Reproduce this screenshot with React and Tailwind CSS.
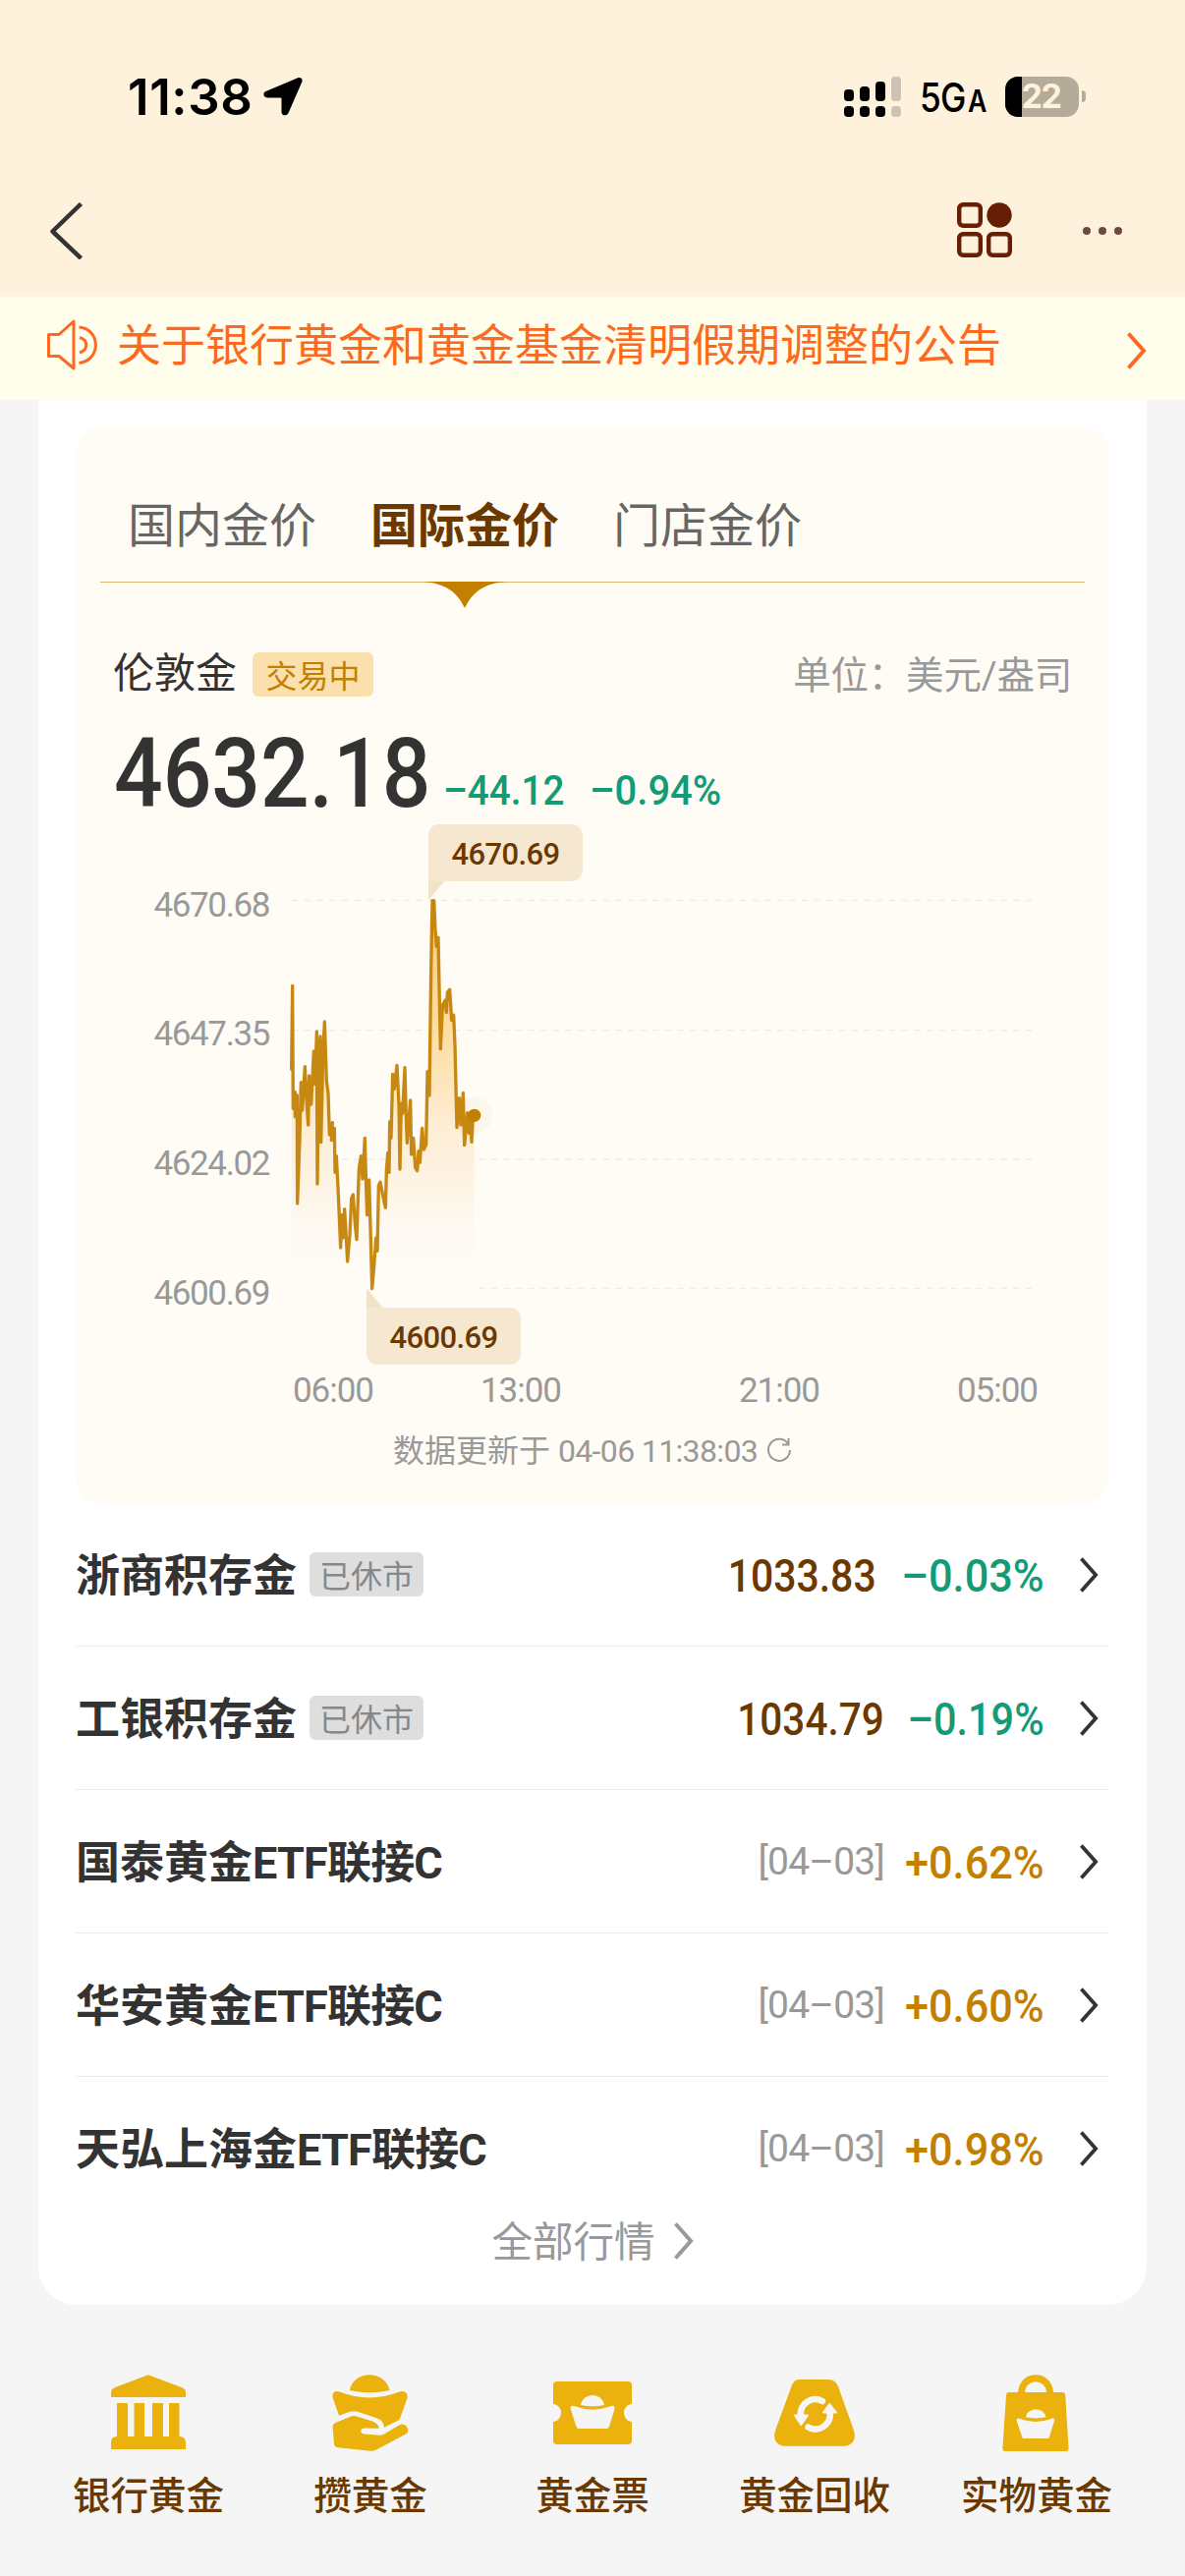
import { useState } from 'react';

const tabs = ['国内金价', '国际金价', '门店金价'];

const funds = [
    { name: '浙商积存金', closed: true, price: '1033.83', change: '–0.03%' },
    { name: '工银积存金', closed: true, price: '1034.79', change: '–0.19%', tight: true },
    { name: '国泰黄金ETF联接C', date: '[04–03]', change: '+0.62%' },
    { name: '华安黄金ETF联接C', date: '[04–03]', change: '+0.60%' },
    { name: '天弘上海金ETF联接C', date: '[04–03]', change: '+0.98%' },
];

const yLabels = ['4670.68', '4647.35', '4624.02', '4600.69'];
const xLabels = ['06:00', '13:00', '21:00', '05:00'];
const gridLines = [916.5, 1048.5, 1180, 1311.5];

// London gold intraday line, in thirds of a pixel
const linePoints = '80,805 83,550 85,925 91,875 91,950 97,885 98,1215 105,1020 109,845 113,930 121,797 127,915 131,975 134,825 140,912 148,750 152,850 157,690 159,1155 163,780 168,705 170,1028 176,760 181,660 187,840 192,878 196,1005 205,968 202,1022 211,985 213,1120 217,1070 222,1165 230,1350 233,1250 237,1320 242,1232 246,1300 251,1392 258,1310 263,1200 268,1188 274,1275 279,1325 286,1110 292,1070 297,1140 304,1015 308,1165 311,1250 317,1143 321,1290 326,1475 332,1405 338,1320 342,1360 346,1160 351,1150 360,1195 367,1228 370,1115 374,1060 378,1120 380,965 384,1015 389,820 394,865 402,793 408,915 411,1110 415,910 419,940 426,800 430,950 433,1030 443,900 446,1065 452,1015 458,1105 464,1115 468,1055 472,1090 479,985 484,1050 491,1035 495,812 501,885 506,500 510,290 515,290 519,380 523,430 528,403 535,743 541,610 549,595 553,632 556,570 563,562 569,655 575,640 579,730 585,983 592,893 597,975 604,877 608,1037 617,938 622,1000 626,960 630,1027 634,945 638,945';

function Chevron({ className }) {
    return (
        <svg viewBox="0 0 20 38" className={className} fill="none" stroke="currentColor" strokeWidth="4">
            <path d="M1.5 1.5 L17 19 L1.5 36.5" />
        </svg>
    );
}

function StatusBar() {
    return (
        <div className="flex h-[196px] items-center justify-between pl-[130px] pr-[101px]">
            <div className="flex items-center text-black">
                <span className="w-[138px] font-[Inter] text-[51px] font-semibold leading-none tracking-[0.6px]">11:38</span>
                <svg viewBox="0 0 40 40" className="h-[40px] w-[40px]">
                    <path d="M34.5 1.5 C38 0 40.5 2 39.3 5.5 L25.5 37 C24 40.5 18.5 40 18.5 36 V22.5 Q18.500 21.500 17.500 21.500 H4 C0 21.500 -1 16.500 2.500 15 Z" fill="#000" />
                </svg>
            </div>
            <div className="flex items-center">
                <svg viewBox="0 0 58 41" className="h-[41px] w-[58px]">
                    <rect x="0" y="13" width="10" height="12" rx="4" />
                    <rect x="16" y="10" width="10" height="15" rx="4" />
                    <rect x="32" y="5" width="10" height="20" rx="4" />
                    <rect x="48" y="0" width="10" height="25" rx="4" fill="#cdc3b2" />
                    <rect x="0" y="30" width="10" height="11" rx="4" />
                    <rect x="16" y="30" width="10" height="11" rx="4" />
                    <rect x="32" y="30" width="10" height="11" rx="4" />
                    <rect x="48" y="30" width="10" height="11" rx="4" fill="#cdc3b2" />
                </svg>
                <span className="ml-[19px] w-[87px] origin-left scale-x-[0.86] whitespace-nowrap pt-[3px] font-[Inter] text-[41px] font-medium leading-none tracking-[-1px] text-black">
                    5G<span className="ml-[3px] text-[31px] font-semibold">A</span>
                </span>
                <div className="relative flex h-[41px] w-[75px] items-center justify-center overflow-hidden rounded-[13px] bg-[#b4ab9a]">
                    <div className="absolute inset-y-0 left-0 w-[17px] bg-black" />
                    <span className="relative right-[1px] font-[Inter] text-[34px] font-bold leading-none tracking-[-1.5px] text-[#fff2dd]">22</span>
                </div>
                <div className="ml-[3px] h-[12px] w-[4px] rounded-r-full bg-[#b4ab9a]" />
            </div>
        </div>
    );
}

function NavBar() {
    return (
        <div className="flex h-[106px] items-start justify-between pl-[50px] pr-[64px] pt-[10px]">
            <svg viewBox="0 0 36 58" className="h-[58px] w-[36px]" fill="none" stroke="#333" strokeWidth="4.500" strokeLinejoin="round">
                <path d="M32.500 1.500 L3.500 29.500 L32.500 57" />
            </svg>
            <div className="flex items-center">
                <svg viewBox="0 0 56 56" className="mr-[72px] h-[56px] w-[56px]" fill="none" stroke="#661f05" strokeWidth="4.400">
                    <rect x="2.200" y="2.200" width="21.600" height="21.600" rx="4" />
                    <circle cx="43" cy="13" r="12.700" fill="#661f05" stroke="none" />
                    <rect x="2.200" y="32.200" width="21.600" height="21.600" rx="4" />
                    <rect x="32.200" y="32.200" width="21.600" height="21.600" rx="4" />
                </svg>
                <div className="mt-px flex gap-2">
                    <i className="h-2 w-2 rounded-full bg-[#6b4a40]" />
                    <i className="h-2 w-2 rounded-full bg-[#6b4a40]" />
                    <i className="h-2 w-2 rounded-full bg-[#6b4a40]" />
                </div>
            </div>
        </div>
    );
}

function Notice() {
    return (
        <div className="flex h-[105px] items-center bg-[#fffdec] pl-[47px] pr-[39px] text-[#fc6a21]">
            <svg viewBox="0 0 54 52" className="mb-[7px] h-[52px] w-[54px]" fill="none" stroke="currentColor" strokeWidth="3" strokeLinejoin="round">
                <path d="M2.500 15.500 H13 L28 2 V50 L13 37.500 H2.500 Z" />
                <path d="M33.500 8 C56 10 56 42 33.500 44.500" />
                <path d="M34 18.500 C43 21 43 31 34 34" />
            </svg>
            <span className="ml-[18px] flex-1 pb-[4px] text-[45px] leading-none">关于银行黄金和黄金基金清明假期调整的公告</span>
            <Chevron className="mt-[4px] h-[38px] w-[20px]" />
        </div>
    );
}

function GoldChart() {
    return (
        <div className="relative flex h-[559px]">
            <div className="w-[197px] pt-[20px] text-right text-[35px] tracking-[-0.040em] text-[#999]">
                {yLabels.map(label => (
                    <div key={label} className="flex h-[131.700px] items-center justify-end">{label}</div>
                ))}
            </div>
            <svg viewBox="274 836 855 559" className="h-[559px] w-[855px]">
                <defs>
                    <linearGradient id="area" gradientUnits="userSpaceOnUse" x1="0" y1="290" x2="0" y2="1475">
                        <stop offset="0" stopColor="#fccb74" />
                        <stop offset="0.300" stopColor="#fddb9d" />
                        <stop offset="0.600" stopColor="#fdeed6" />
                        <stop offset="0.850" stopColor="#fef9f2" />
                        <stop offset="1" stopColor="#fffcf6" />
                    </linearGradient>
                </defs>
                {gridLines.map(y => (
                    <line key={y} x1="297" x2="1050" y1={y} y2={y} stroke="#ececec" strokeWidth="1.500" strokeDasharray="6.330 6.330" />
                ))}
                <g transform="translate(270 820) scale(0.33333)">
                    <polygon points={`80,1475 ${linePoints} 638,1475`} fill="url(#area)" />
                    <polyline points={linePoints} fill="none" stroke="#c27f00" strokeOpacity="0.920" strokeWidth="10" strokeLinejoin="round" strokeLinecap="round" />
                    <circle cx="638" cy="946" r="56" fill="#c27f00" fillOpacity="0.040" />
                    <circle cx="638" cy="946" r="20" fill="#c27f00" />
                </g>
                <path d="M436 894 H455 L436 916 Z" fill="#f3e3c6" />
                <path d="M373 1311 L392 1334 H373 Z" fill="#f3e3c6" />
            </svg>
            <div className="absolute left-[359px] top-[3px] flex h-[58px] w-[157px] items-center justify-center rounded-[11px] rounded-bl-none bg-[#f5e7d0] pt-[4px] text-[31px] font-medium tracking-[-0.6px] text-[#6b3800]">4670.69</div>
            <div className="absolute left-[296px] top-[495px] flex h-[58px] w-[157px] items-center justify-center rounded-[11px] rounded-tl-none bg-[#f5e7d0] pt-[4px] text-[31px] font-medium tracking-[-0.6px] text-[#6b3800]">4600.69</div>
        </div>
    );
}

function GoldCard() {
    const [active, setActive] = useState(1);

    return (
        <div className="h-[1097px] rounded-[28px] bg-[#fffcf5]">
            <div className="mx-[25px] flex h-[159px] gap-[55px] border-b border-[#dfb66a] pl-[28px] pt-[46px]">
                {tabs.map((tab, i) => (
                    <button
                        key={tab}
                        onClick={() => setActive(i)}
                        className={i === active ? 'relative text-[48px] font-bold leading-none text-[#6b3800]' : 'text-[48px] leading-none text-[#666]'}
                    >
                        {tab}
                        {i === active && (
                            <svg viewBox="0 0 84 27" className="absolute left-[54px] top-full h-[27px] w-[84px]">
                                <path d="M0 0 H84 C62 2 50 10 42 27 C34 10 22 2 0 0 Z" fill="#c27f00" />
                            </svg>
                        )}
                    </button>
                ))}
            </div>
            <div className="mt-[70px] flex h-[46px] items-center pl-[38px] pr-[38px]">
                <span className="text-[42px] leading-none text-[#333]">伦敦金</span>
                <span className="ml-[16px] flex h-[45px] w-[123px] items-center justify-center rounded-[6px] bg-[#fbe0ae] pt-[5px] text-[32px] leading-none text-[#c27f00]">交易中</span>
                <span className="ml-auto pt-[4px] text-[38.500px] leading-none tracking-[-0.2px] text-[#999]">单位：美元/盎司</span>
            </div>
            <div className="mt-[30px] flex h-[98px] items-end pl-[39px]">
                <span className="w-[335px] origin-left scale-x-[0.892] text-[98px] font-medium leading-none text-[#333]">4632.18</span>
                <span className="w-[149px] origin-left scale-x-[0.92] pb-[11px] text-[42px] font-medium leading-none text-[#119b77]">–44.12</span>
                <span className="origin-left scale-x-[0.95] pb-[11px] text-[42px] font-medium leading-none text-[#119b77]">–0.94%</span>
            </div>
            <div className="-mt-px">
                <GoldChart />
            </div>
            <div className="grid h-[41px] grid-cols-[191px_263px_222px_100px] items-center pl-[221px] text-[35px] leading-none tracking-[-0.030em] text-[#999]">
                {xLabels.map(label => <span key={label}>{label}</span>)}
            </div>
            <div className="flex h-[80px] items-center justify-center text-[32px] text-[#999]">
                <span className="pt-[2px]">数据更新于</span>
                <span className="ml-2 pt-[2px] tracking-[-0.020em]">04-06 11:38:03</span>
                <svg viewBox="0 0 26 26" className="ml-[9px] h-[26px] w-[26px]" fill="none" stroke="currentColor" strokeWidth="2">
                    <path d="M22 6.500 A11 11 0 1 0 24 13" />
                    <path d="M22.500 1 V7.500 H16" />
                </svg>
            </div>
        </div>
    );
}

function FundRow({ fund, last }) {
    const up = fund.change.startsWith('+');
    return (
        <div className={last ? 'flex h-[145px] items-center' : 'flex h-[146px] items-center border-b border-[#ececec]'}>
            <span className="pt-[3px] text-[45px] font-bold leading-none text-[#333]">
                {fund.name.split('ETF')[0]}
                {!fund.closed && <span className="tracking-[-0.8px]">ETF联接C</span>}
            </span>
            {fund.closed && (
                <span className="ml-[13px] flex h-[45px] w-[116px] items-center justify-center rounded-[6px] bg-[#dedede] pt-[4px] text-[32px] leading-none text-[#888]">已休市</span>
            )}
            <span className="ml-auto flex items-center whitespace-nowrap pt-[2px] leading-none">
                {fund.price && (
                    <span className={fund.tight ? 'mr-[19px] origin-right scale-x-[0.88] text-[46px] font-medium text-[#6b3800]' : 'mr-[27px] origin-right scale-x-[0.89] text-[46px] font-medium text-[#6b3800]'}>{fund.price}</span>
                )}
                {fund.date && <span className="mr-[19px] text-[39px] tracking-[-0.020em] text-[#999]">{fund.date}</span>}
                <span className="flex w-[144px] justify-end">
                    <span className={up ? 'origin-right scale-x-[0.94] text-[46px] font-medium text-[#c27f00]' : fund.tight ? 'origin-right scale-x-[0.9] text-[46px] font-medium text-[#119b77]' : 'origin-right scale-x-[0.94] text-[46px] font-medium text-[#119b77]'}>{fund.change}</span>
                </span>
            </span>
            <Chevron className="ml-[36px] mr-[11px] h-[36px] w-[19px] text-[#333]" />
        </div>
    );
}

function BankIcon() {
    return (
        <svg viewBox="0 0 96 90" className="h-[90px] w-[96px]" fill="#ebb10c">
            <path d="M10 30 V25.500 Q10 22 13 20.500 L47.900 7.300 L83 20.500 Q86 22 86 25.500 V30 Z" />
            <path d="M16 36 H27 V70 H33.500 V36 H44 V70 H52 V36 H63 V70 H69 V36 H79.500 V70 Q86 70 86 76 V83 H10 V76 Q10 70 16 70 Z" />
        </svg>
    );
}

function HandIcon() {
    return (
        <svg viewBox="0 0 96 90" className="h-[90px] w-[96px]" fill="#ebb10c">
            <path d="M26.800 23 C31 2 63 2 67.500 23 Q47 27.500 26.800 23 Z" />
            <path d="M9.800 31 C8 25 13 22.500 17 24.800 Q47 36 77 24.800 C82 22 87 26 85.500 31 L77.500 53 L62 60.700 C61 55 59.500 53.500 55 51.500 L35 44.800 Q31 43.500 27 44.800 L16 48.700 Z" />
            <path d="M9.500 60 Q9.500 57.500 12 56.200 L27 50 Q30.600 48.400 34 49.500 L50 54.500 Q56.500 57.500 56.800 61.700 L42 61.500 C37 61.500 37 67.300 42 67.500 L57 68.800 Q59.500 69 62 67.500 L77.500 58.200 C83 55 89.500 63 84.500 67.300 L54 83.500 Q51.500 85 48 84.800 L15 81.300 Q11.300 80.700 11 77 Z" />
        </svg>
    );
}

function TicketIcon() {
    return (
        <svg viewBox="0 0 96 90" className="h-[90px] w-[96px]">
            <path d="M12 14 H84 Q88 14 88 18 V36.700 A9.400 9.400 0 0 0 88 55.300 V74 Q88 78 84 78 H12 Q8 78 8 74 V55.300 A9.400 9.400 0 0 0 8 36.700 V18 Q8 14 12 14 Z" fill="#ebb10c" />
            <path d="M36 38 C38 24.500 58 24.500 60 38 Q48 40.500 36 38 Z" fill="#f5f5f5" />
            <path d="M25.700 42 C25 39 27.500 38 30 39.300 Q48 46 66.500 39.300 C69.500 38 71 39.500 70.500 42 L65 60 Q64.300 62 62 62 H34 Q32 62 31.500 60 Z" fill="#f5f5f5" />
        </svg>
    );
}

function RecycleIcon() {
    return (
        <svg viewBox="0 0 96 90" className="h-[90px] w-[96px]">
            <path d="M32 12 H62 Q69 12 72 19 L88 64 C91 73 86 79.700 78 79.700 H18 C10 79.700 5 73 8 64 L24.500 19 Q27 12 32 12 Z" fill="#ebb10c" />
            <g fill="none" stroke="#f5f5f5" strokeWidth="6.500">
                <path d="M56 34 A15 15 0 0 0 33.900 49" strokeLinecap="round" />
                <path d="M41.500 60.500 A15 15 0 0 0 63.700 45.500" strokeLinecap="round" />
            </g>
            <path d="M28 48.500 H41 L34.300 58 Z M57 45.500 H70 L63.200 37 Z" fill="#f5f5f5" stroke="#f5f5f5" strokeWidth="2" strokeLinejoin="round" />
        </svg>
    );
}

function BagIcon() {
    return (
        <svg viewBox="0 0 96 90" className="h-[90px] w-[96px]">
            <path d="M32.700 27 V25 C33.500 6 60.500 6 61.500 25 V27" fill="none" stroke="#ebb10c" strokeWidth="7" />
            <path d="M20 25 H74 Q77 25 77.200 28 L80.600 82 Q80.600 85 78 85 H16 Q13.300 85 13.400 82 L17 28 Q17.200 25 20 25 Z" fill="#ebb10c" />
            <path d="M36.800 50.300 C39 40 55.500 40 57.500 50.300 Q47 52.500 36.800 50.300 Z" fill="#f5f5f5" />
            <path d="M27.700 54 C27 51.500 29 50.800 31 52 Q47 58 63 52 C65.500 50.800 66.500 52 66 54 L61 70.500 Q60.500 72 59 72 H35 Q33.700 72 33.200 70.500 Z" fill="#f5f5f5" />
        </svg>
    );
}

const entries = [
    { label: '银行黄金', Icon: BankIcon },
    { label: '攒黄金', Icon: HandIcon },
    { label: '黄金票', Icon: TicketIcon },
    { label: '黄金回收', Icon: RecycleIcon },
    { label: '实物黄金', Icon: BagIcon },
];

function App() {
    return (
        <div className="h-[2622px] w-[1206px] overflow-hidden bg-[#f5f5f5] font-[Roboto,'Noto_Sans_CJK_SC',sans-serif]">
            <header className="bg-[#fff2dd]">
                <StatusBar />
                <NavBar />
            </header>
            <Notice />
            <main className="mx-[39px] h-[1939px] rounded-b-[39px] bg-white px-[38px] pt-[27px]">
                <GoldCard />
                <div className="-mt-px">
                    {funds.map((fund, i) => (
                        <FundRow key={fund.name} fund={fund} last={i === funds.length - 1} />
                    ))}
                </div>
                <div className="flex h-[44px] items-center justify-center gap-[19px] text-[#999]">
                    <span className="pt-[4px] text-[41.500px] leading-none">全部行情</span>
                    <Chevron className="h-[38px] w-[20px]" />
                </div>
            </main>
            <nav className="grid grid-cols-5 px-[38px] pt-[64px]">
                {entries.map(({ label, Icon }) => (
                    <div key={label} className="flex flex-col items-center gap-[22px]">
                        <Icon />
                        <span className="text-[38.500px] font-medium leading-none text-[#6b3800]">{label}</span>
                    </div>
                ))}
            </nav>
        </div>
    );
}

export default App;
